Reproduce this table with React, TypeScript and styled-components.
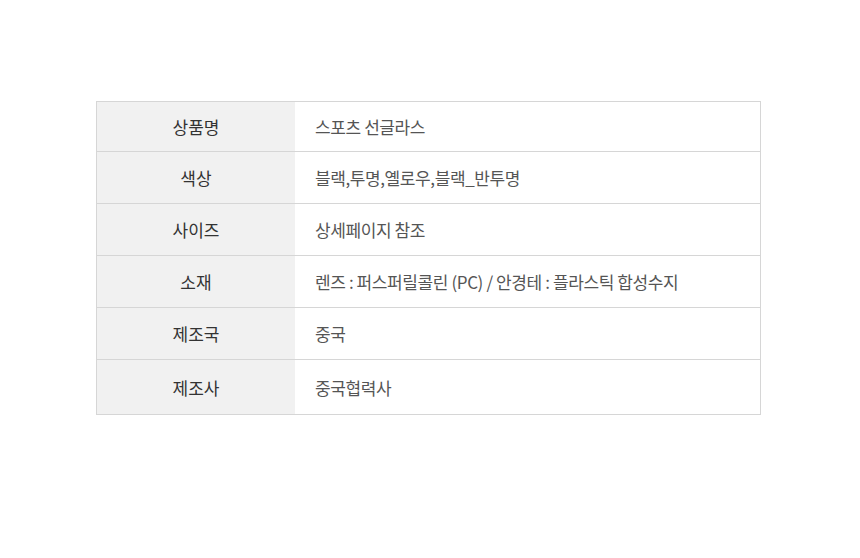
import React from 'react';
import styled, { createGlobalStyle } from 'styled-components';

const GlobalStyle = createGlobalStyle`
  html, body {
    margin: 0;
    padding: 0;
    background: #ffffff;
  }
  body {
    font-family: "Noto Sans CJK KR", "Noto Sans", sans-serif;
  }
`;

const Page = styled.div`
  width: 860px;
  height: 558px;
  padding: 101px 99px 0 96px;
  box-sizing: border-box;
`;

const Table = styled.div`
  width: 665px;
  border: 1px solid #d6d6d6;
  box-sizing: border-box;
`;

const Row = styled.div<{ $h: number }>`
  display: grid;
  grid-template-columns: 198px 1fr;
  height: ${p => p.$h}px;
  border-top: 1px solid #d6d6d6;
  box-sizing: content-box;

  &:first-child {
    border-top: none;
  }
`;

const Label = styled.div`
  background: #f1f1f1;
  display: flex;
  align-items: center;
  justify-content: center;
  font-size: 17px;
  color: #333333;
  letter-spacing: 0;
`;

const Value = styled.div`
  display: flex;
  align-items: center;
  padding-left: 20px;
  font-size: 17px;
  color: #555555;
  letter-spacing: -0.4px;
`;

const rows = [
  { label: '상품명', value: '스포츠 선글라스', h: 49 },
  { label: '색상', value: '블랙,투명,옐로우,블랙_반투명', h: 51 },
  { label: '사이즈', value: '상세페이지 참조', h: 51 },
  { label: '소재', value: '렌즈 : 퍼스퍼릴콜린 (PC) / 안경테 : 플라스틱 합성수지', h: 51 },
  { label: '제조국', value: '중국', h: 51 },
  { label: '제조사', value: '중국협력사', h: 54 },
];

const App: React.FC = () => (
  <>
    <GlobalStyle />
    <Page>
      <Table>
        {rows.map(r => (
          <Row key={r.label} $h={r.h}>
            <Label>{r.label}</Label>
            <Value>{r.value}</Value>
          </Row>
        ))}
      </Table>
    </Page>
  </>
);

export default App;
